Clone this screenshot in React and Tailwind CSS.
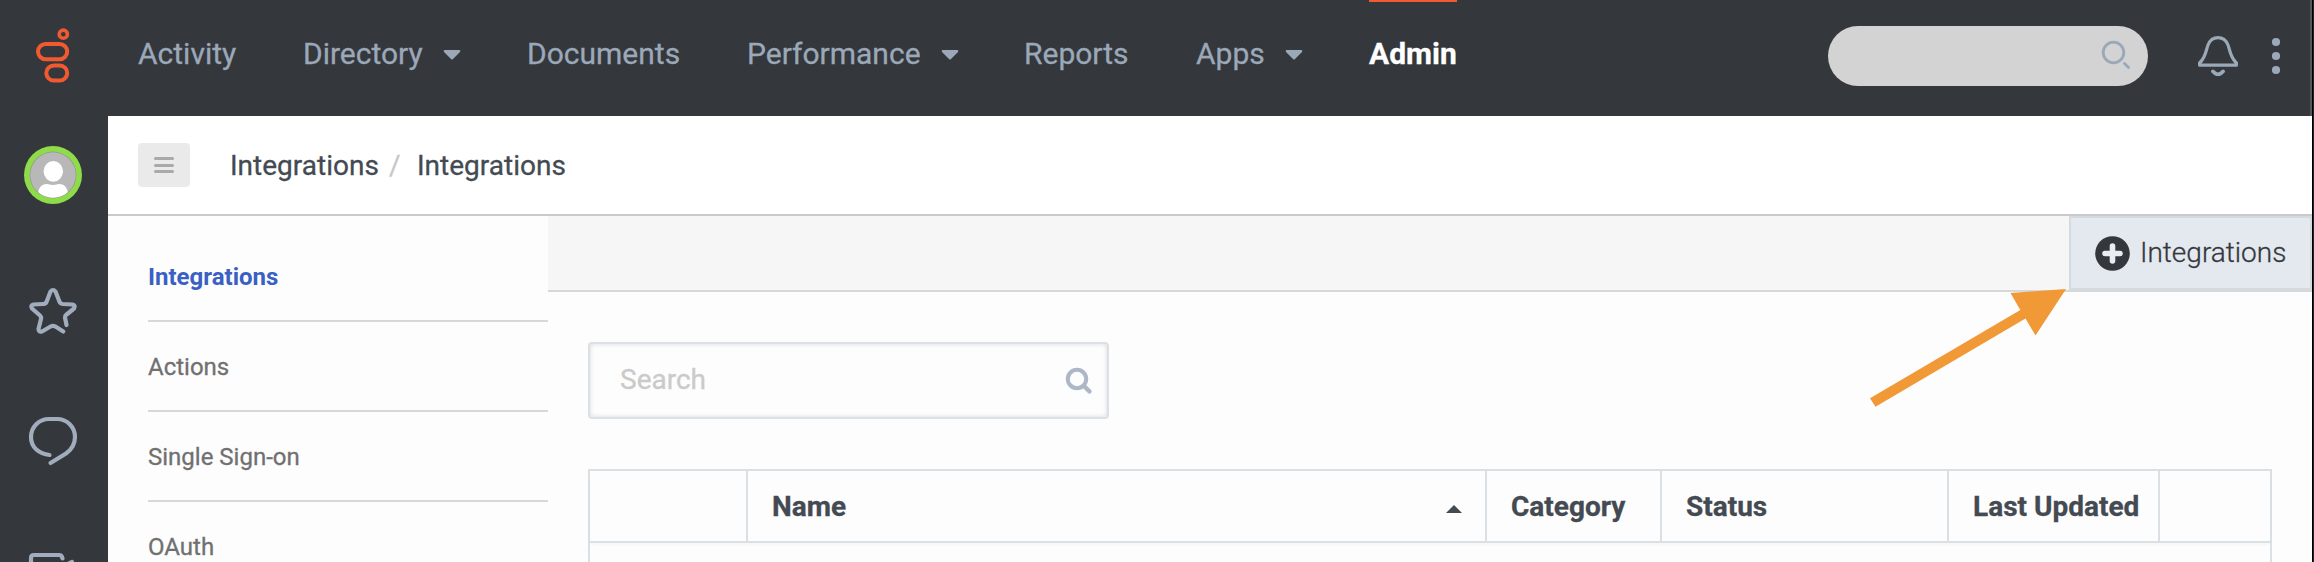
const NAV = [
  { label: "Activity", cls: "w-[165px]" },
  { label: "Directory", cls: "w-[224px]", caret: true },
  { label: "Documents", cls: "w-[220px]" },
  { label: "Performance", cls: "w-[277px]", caret: true },
  { label: "Reports", cls: "w-[172px]" },
  { label: "Apps", cls: "w-[173px]", caret: true },
];

const SIDE = ["Integrations", "Actions", "Single Sign-on", "OAuth"];

function Logo() {
  return (
    <svg className="block" width="36" height="58" viewBox="35 27 36 58" fill="none" stroke="#f05a30" strokeWidth="4">
      <circle cx="63.300" cy="34.200" r="4.100" strokeWidth="3.600" />
      <rect x="38" y="44" width="29.200" height="15.200" rx="7.600" />
      <rect x="46.300" y="65.400" width="20.900" height="15.200" rx="7.600" />
    </svg>
  );
}

function Avatar() {
  return (
    <svg className="block" width="58" height="58" viewBox="0 0 58 58">
      <defs>
        <clipPath id="face"><circle cx="29" cy="29" r="22.800" /></clipPath>
      </defs>
      <circle cx="29" cy="29" r="29" fill="#8fdc4a" />
      <circle cx="29" cy="29" r="23.4" fill="#929292" />
      <g clipPath="url(#face)">
        <rect width="58" height="58" fill="#b8b8b8" />
        <ellipse cx="29.300" cy="25.300" rx="9.700" ry="10.400" fill="#fff" />
        <path d="M14 47c1-6 4-9 9-9 2 0 3 1 6 1s4-1 6-1c5 0 8 3 9 9v7H14z" fill="#fff" />
      </g>
    </svg>
  );
}

export default function App() {
  return (
    <div className="relative flex h-[562px] w-[2314px] overflow-hidden bg-[#34373c] font-['Roboto',sans-serif] [-webkit-text-stroke:0.3px]">
      <aside className="flex w-[108px] shrink-0 flex-col items-start">
        <div className="pt-[27px] pl-[35px]"><Logo /></div>
        <div className="mt-[61px] pl-6"><Avatar /></div>
        <svg className="mt-[76px] block" width="108" height="282" viewBox="0 280 108 282" fill="none" stroke="#a1acbd" strokeWidth="4.200" strokeLinecap="round" strokeLinejoin="round">
          <path d="M66.500 325L65 317.500Q64.700 316 66 315L74 308.500Q76 305.500 72.500 304.500L62.500 304Q60.500 303.800 59.600 302L55.500 291.500Q53 288.500 50.500 291.500L46.500 302Q45.500 304 43 304L33.500 304.500Q30 305.500 32 308.500L40 315.500Q41.500 317 41 319L38.500 329Q38.500 332.500 42 331.500L51 326.300Q53 325.300 55 326.300L63.300 331.500" />
          <path d="M49.500 455C39 454 31 447.500 31 437C31 427 39 419 49 419H57C67 419 75 427 75 437C75 444 71 450 66 453.500L50.500 463" />
          <path d="M31 570V558Q31 555 34 555H59Q62 555 62.500 558.500M69 563.500l3-1.500" />
        </svg>
      </aside>

      <div className="flex w-[2204px] shrink-0 flex-col">
        <header className="flex h-[116px] items-start border-r-2 border-[#54575b] pl-[30px]">
          <nav className="flex h-full text-[30px] leading-9 text-[#9ba8b8]">
            {NAV.map((n) => (
              <div key={n.label} className={"flex shrink-0 pt-9 " + n.cls}>
                <span>{n.label}</span>
                {n.caret && (
                  <svg className="mt-[14px] ml-5 block" width="18" height="10" viewBox="0 0 18 10">
                    <path d="M1.500 0h15q1.500 .5 .5 2L10 9q-1 1-2 0L1 2Q0 .5 1.500 0z" fill="#9ba8b8" />
                  </svg>
                )}
              </div>
            ))}
            <div className="h-full border-t-2 border-[#f05a30] pt-[34px] font-bold text-white">Admin</div>
          </nav>
          <div className="mt-[26px] mr-[50px] ml-auto flex h-[60px] w-[320px] items-center justify-end rounded-full bg-[#d3d3d3]">
            <svg className="mr-[17px] mb-[4px] block" width="30" height="30" viewBox="2101 38 30 30" fill="none" stroke="#9ba8b8" strokeWidth="2.800" strokeLinecap="round">
              <circle cx="2113.500" cy="51.500" r="10.300" />
              <path d="M2124.500 62.500l4 4" />
            </svg>
          </div>
          <svg className="mt-[34px] block" width="112" height="46" viewBox="2198 34 112 46" fill="none" stroke="#9ba8b8" strokeWidth="3.200" strokeLinecap="round" strokeLinejoin="round">
            <path d="M2199.600 65.200V63C2206 57 2206 50 2208 45C2210 40 2214 37.600 2218 37.600C2222 37.600 2226 40 2228 45C2230 50 2230 57 2236.400 63V65.200Z" />
            <path d="M2212.800 71.300q5.200 6 10.400 0" strokeWidth="3.600" />
            <g fill="#9ba8b8" stroke="none">
              <circle cx="2276" cy="42" r="4.100" /><circle cx="2276" cy="56" r="4.100" /><circle cx="2276" cy="70" r="4.100" />
            </g>
          </svg>
        </header>

        <div className="flex h-[100px] items-start border-b-2 border-[#cacaca] bg-white pt-[27px] pl-[30px] text-[28px] leading-[34px] text-[#444a52]">
          <button className="flex h-11 w-[52px] flex-col items-center justify-center gap-[3.500px] rounded bg-[#eaeaea]">
            <span className="h-[3px] w-5 rounded-sm bg-[#a9a9a9]" />
            <span className="h-[3px] w-5 rounded-sm bg-[#a9a9a9]" />
            <span className="h-[3px] w-5 rounded-sm bg-[#a9a9a9]" />
          </button>
          <span className="mt-[6px] ml-10 w-[159px]">Integrations</span>
          <span className="mt-[6px] w-[28px] text-[#c8c8c8]">/</span>
          <span className="mt-[6px]">Integrations</span>
        </div>

        <div className="flex min-h-0 flex-1 bg-[#fdfdfd]">
          <ul className="w-[440px] shrink-0 pt-4 pl-10 text-2xl">
            {SIDE.map((s, i) => (
              <li key={s} className={"flex h-[90px] items-center border-b-2 border-[#d8d8d8] pt-[2px] " + (i === 0 ? "font-bold text-[#3a60c4] [-webkit-text-stroke:0px]" : "text-[#707070]")}>
                {s}
              </li>
            ))}
          </ul>

          <main className="flex w-[1764px] flex-col">
            <div className="flex h-[76px] shrink-0 justify-end border-b-2 border-[#d8d8d8] bg-[#f6f6f6]">
              <button className="flex w-[243px] items-center border-2 border-[#d5dadf] bg-[#e4e8ef] pl-6 text-[28px] font-light text-[#34373c]">
                <svg className="block" width="35" height="35" viewBox="0 0 35 35">
                  <circle cx="17.500" cy="17.500" r="17.300" fill="#34373c" />
                  <path d="M17.500 10v15M10 17.500h15" stroke="#e9ecf2" strokeWidth="5.600" strokeLinecap="round" />
                </svg>
                <span className="ml-[10px]">Integrations</span>
              </button>
            </div>
            <div className="mt-[50px] ml-10 flex h-[77px] w-[521px] shrink-0 items-center justify-between rounded border-2 border-[#dbe0e6] pr-[14px] pl-[30px] text-[28px] text-[#cacaca] shadow-[inset_0_0_5px_rgba(0,0,0,0.14)]">
              <span className="mt-[-2px]">Search</span>
              <svg className="block" width="28" height="28" viewBox="0 0 28 28" fill="none" stroke="#adb7c6" strokeLinecap="round">
                <circle cx="12" cy="12" r="9.200" strokeWidth="4" />
                <path d="M19 19l5.500 5.500" strokeWidth="4.400" />
              </svg>
            </div>
            <div className="mt-[50px] ml-10 h-[100px] w-[1684px] shrink-0 border-2 border-[#dbe0e5]">
              <div className="flex h-[72px] items-center border-b-2 border-[#dbe0e5] text-[28px] font-bold text-[#444a52] shadow-[0_2px_3px_rgba(0,0,0,0.03)] *:flex *:h-full *:items-center *:border-[#dbe0e5] *:pt-px">
                <div className="w-[158px] border-r-2" />
                <div className="w-[739px] justify-between border-r-2 pr-[23px] pl-6">
                  <span>Name</span>
                  <svg className="mt-1 block" width="16" height="8" viewBox="0 0 16 8"><path d="M8 0l8 8H0z" fill="#444a52" /></svg>
                </div>
                <div className="w-[175px] border-r-2 pl-6">Category</div>
                <div className="w-[287px] border-r-2 pl-6">Status</div>
                <div className="w-[211px] border-r-2 pl-6">Last Updated</div>
                <div className="w-[110px]" />
              </div>
            </div>
          </main>
        </div>
      </div>
      <div className="w-[2px] shrink-0 border-l border-black bg-[#222]" />
      <svg className="absolute top-[280px] left-[1860px]" width="220" height="140" viewBox="1860 280 220 140">
        <path d="M2066 289L2010.500 293L2020.300 310L1870 398.200L1875.500 406.800L2025.500 318.500L2035.500 335.500Z" fill="#f19937" />
      </svg>
    </div>
  );
}
